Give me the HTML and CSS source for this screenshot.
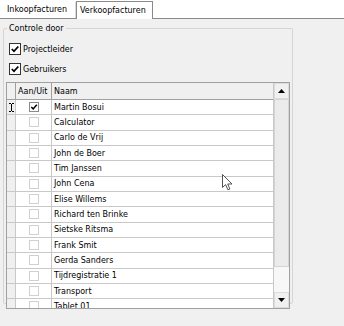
FILE: index.html
```html
<!DOCTYPE html>
<html lang="nl">

<head>
    <meta charset="UTF-8">
    <title>Facturen</title>
    <link rel="stylesheet" href="styles.css">
</head>

<body>
    <!-- Tabbladen -->
    <div class="tabs">
        <div class="tab">Inkoopfacturen</div>
        <div class="tab active">Verkoopfacturen</div>
    </div>

    <div class="panel">
        <fieldset class="group">
            <legend>Controle door</legend>

            <label class="check">
                <span class="box">
                    <svg viewBox="0 0 10 10" width="10" height="10"><path d="M1.8 5 L4 7.3 L8.3 2.5" fill="none" stroke="#000" stroke-width="1.8"/></svg>
                </span>
                Projectleider
            </label>
            <label class="check">
                <span class="box">
                    <svg viewBox="0 0 10 10" width="10" height="10"><path d="M1.8 5 L4 7.3 L8.3 2.5" fill="none" stroke="#000" stroke-width="1.8"/></svg>
                </span>
                Gebruikers
            </label>

            <!-- Tabel met gebruikers -->
            <div class="grid">
                <div class="grid-body">
                    <div class="grid-head">
                        <div class="cell rowhead"></div>
                        <div class="cell">Aan/Uit</div>
                        <div class="cell">Naam</div>
                    </div>
                    <div class="grid-row">
                        <div class="cell rowhead">
                            <svg class="ibeam" viewBox="0 0 5 9" width="5" height="9"><path d="M0 0.5 H2 M3 0.5 H5 M2.5 1 V8 M0 8.5 H2 M3 8.5 H5" stroke="#000" stroke-width="1" fill="none"/></svg>
                        </div>
                        <div class="cell center"><span class="cb checked"><svg viewBox="0 0 8 8" width="8" height="8"><path d="M1.3 4 L3.2 5.9 L6.8 1.8" fill="none" stroke="#000" stroke-width="1.5"/></svg></span></div>
                        <div class="cell">Martin Bosui</div>
                    </div>
                    <div class="grid-row"><div class="cell rowhead"></div><div class="cell center"><span class="cb"></span></div><div class="cell">Calculator</div></div>
                    <div class="grid-row"><div class="cell rowhead"></div><div class="cell center"><span class="cb"></span></div><div class="cell">Carlo de Vrij</div></div>
                    <div class="grid-row"><div class="cell rowhead"></div><div class="cell center"><span class="cb"></span></div><div class="cell">John de Boer</div></div>
                    <div class="grid-row"><div class="cell rowhead"></div><div class="cell center"><span class="cb"></span></div><div class="cell">Tim Janssen</div></div>
                    <div class="grid-row"><div class="cell rowhead"></div><div class="cell center"><span class="cb"></span></div><div class="cell">John Cena</div></div>
                    <div class="grid-row"><div class="cell rowhead"></div><div class="cell center"><span class="cb"></span></div><div class="cell">Elise Willems</div></div>
                    <div class="grid-row"><div class="cell rowhead"></div><div class="cell center"><span class="cb"></span></div><div class="cell">Richard ten Brinke</div></div>
                    <div class="grid-row"><div class="cell rowhead"></div><div class="cell center"><span class="cb"></span></div><div class="cell">Sietske Ritsma</div></div>
                    <div class="grid-row"><div class="cell rowhead"></div><div class="cell center"><span class="cb"></span></div><div class="cell">Frank Smit</div></div>
                    <div class="grid-row"><div class="cell rowhead"></div><div class="cell center"><span class="cb"></span></div><div class="cell">Gerda Sanders</div></div>
                    <div class="grid-row"><div class="cell rowhead"></div><div class="cell center"><span class="cb"></span></div><div class="cell">Tijdregistratie 1</div></div>
                    <div class="grid-row"><div class="cell rowhead"></div><div class="cell center"><span class="cb"></span></div><div class="cell">Transport</div></div>
                    <div class="grid-row"><div class="cell rowhead"></div><div class="cell center"><span class="cb"></span></div><div class="cell">Tablet 01</div></div>
                </div>

                <!-- Verticale scrollbalk -->
                <div class="scrollbar">
                    <div class="sb-btn"><svg viewBox="0 0 7 4" width="7" height="4"><path d="M0 4 L3.5 0 L7 4 Z" fill="#000"/></svg></div>
                    <div class="sb-thumb"></div>
                    <div class="sb-track"></div>
                    <div class="sb-btn"><svg viewBox="0 0 7 4" width="7" height="4"><path d="M0 0 L7 0 L3.5 4 Z" fill="#000"/></svg></div>
                </div>
            </div>
        </fieldset>
    </div>

    <!-- Muiscursor -->
    <svg class="cursor" viewBox="0 0 11 17" width="11" height="17">
        <path d="M0.5 0.5 L0.5 13.5 L3.6 10.6 L5.9 15.8 L7.9 15 L5.7 10 L10 10 Z" fill="#fff" stroke="#555" stroke-width="1" stroke-linejoin="round"/>
    </svg>
</body>

</html>
```

FILE: styles.css
```css
/* Algemene stijl: Windows-formulier */
body {
    margin: 0;
    width: 344px;
    height: 326px;
    overflow: hidden;
    position: relative;
    font-family: 'DejaVu Sans', sans-serif;
    font-size: 8px;
    color: #000;
    background-color: #f0f0f0;
}

/* Tabbladen */
.tabs {
    display: flex;
    align-items: flex-end;
    height: 18px;
    padding-left: 2px;
    background-color: #fff;
    border-bottom: 1px solid #8a8a8a;
}

.tab {
    box-sizing: border-box;
    width: 74px;
    height: 16px;
    line-height: 16px;
    padding-left: 5px;
    border-right: 1px solid #d9d9d9;
    white-space: nowrap;
}

.tab.active {
    width: 77px;
    height: 18px;
    line-height: 17px;
    padding-left: 3px;
    margin-bottom: -1px;
    background-color: #fff;
    border: 1px solid #8a8a8a;
    border-bottom: none;
}

.panel {
    padding: 3px 51px 0 3px;
}

/* Groepsvak */
.group {
    margin: 0;
    height: 276px;
    padding: 4px 2px 0 2px;
    border: 1px solid #d5d5d5;
    border-radius: 2px;
}

.group legend {
    padding: 0 2px;
    margin-left: 1px;
    line-height: 13px;
}

.check {
    display: flex;
    align-items: center;
    gap: 2px;
    height: 20px;
    padding-left: 3px;
}

.box {
    display: flex;
    width: 10px;
    height: 10px;
    border: 1px solid #333;
    background-color: #fff;
}

/* Tabel */
.grid {
    display: flex;
    box-sizing: border-box;
    height: 227px;
    margin-top: 3px;
    border: 1px solid #a0a0a0;
    background-color: #fff;
}

.grid-body {
    flex: 1;
    overflow: hidden;
}

.grid-head,
.grid-row {
    display: grid;
    grid-template-columns: 9px 36px 1fr;
    box-sizing: border-box;
}

.grid-head {
    height: 17px;
    background-color: #f0f0f0;
    border-bottom: 1px solid #a0a0a0;
}

.grid-row {
    height: 15.33px;
    border-bottom: 1px solid #c8c8c8;
}

.cell {
    display: flex;
    align-items: center;
    box-sizing: border-box;
    padding-left: 2px;
    border-right: 1px solid #c8c8c8;
    white-space: nowrap;
    overflow: hidden;
}

.cell:last-child {
    border-right: none;
}

.grid-head .cell {
    border-right-color: #a0a0a0;
}

.cell.rowhead {
    padding-left: 0;
    justify-content: center;
    background-color: #f0f0f0;
}

.cell.center {
    padding-left: 0;
    justify-content: center;
}

.cb {
    display: flex;
    width: 8px;
    height: 8px;
    border: 1px solid #d0d0d0;
    background-color: #fff;
}

.cb.checked {
    border-color: #8a8a8a;
}

/* Scrollbalk */
.scrollbar {
    display: flex;
    flex-direction: column;
    width: 16px;
    box-sizing: border-box;
    border-left: 1px solid #c8c8c8;
    background-color: #f0f0f0;
}

.sb-btn {
    display: flex;
    align-items: center;
    justify-content: center;
    height: 16px;
    box-sizing: border-box;
    border: 1px solid #dcdcdc;
    background-color: #f0f0f0;
}

.sb-thumb {
    height: 168px;
    box-sizing: border-box;
    border: 1px solid #d4d4d4;
    background-color: #ebebeb;
}

.sb-track {
    flex: 1;
    background-color: #f7f7f7;
}

/* Muisaanwijzer boven de tabel */
.cursor {
    position: absolute;
    left: 222px;
    top: 174px;
}
```
